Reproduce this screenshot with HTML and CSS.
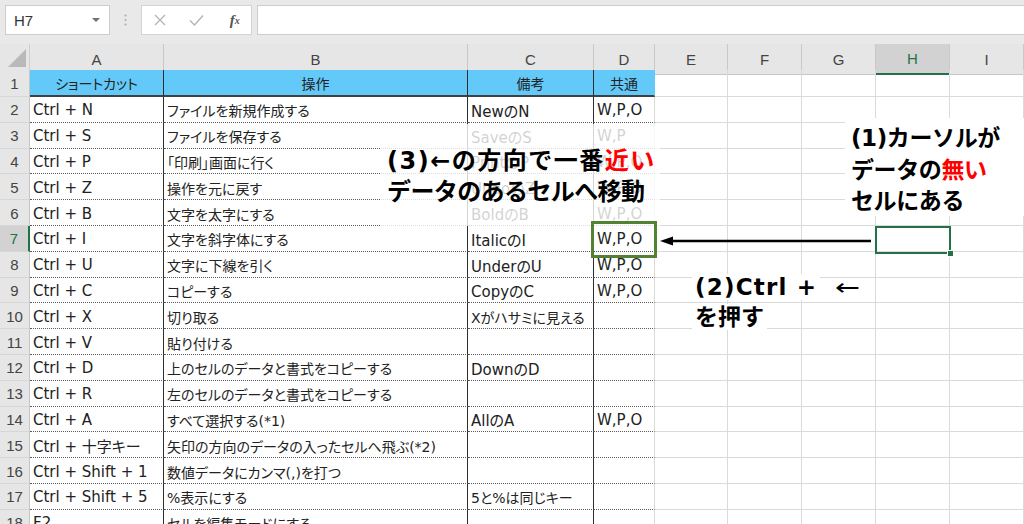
FILE: index.html
```html
<!DOCTYPE html>
<html lang="ja">
<head>
<meta charset="utf-8">
<title>Excel ショートカット</title>
<link rel="stylesheet" href="styles.css">
</head>
<body>
<div class="fbar">
  <div class="namebox"><span>H7</span><span class="caret"></span></div>
  <div class="sep"><svg width="3" height="12" viewBox="0 0 3 12"><circle cx="1.5" cy="1.5" r="1" fill="#a8a8a8"/><circle cx="1.5" cy="6" r="1" fill="#a8a8a8"/><circle cx="1.5" cy="10.5" r="1" fill="#a8a8a8"/></svg></div>
  <div class="fxbox">
    <span class="ico"><svg width="12" height="12" viewBox="0 0 12 12"><path d="M1 1L11 11M11 1L1 11" stroke="#b4b4b4" stroke-width="1.3" fill="none"/></svg></span>
    <span class="ico"><svg width="15" height="12" viewBox="0 0 15 12"><path d="M1 6.5L5.5 11L14 1.5" stroke="#b4b4b4" stroke-width="1.4" fill="none"/></svg></span>
    <span class="ico fx">f<sub>x</sub></span>
  </div>
  <div class="formula"></div>
</div>

<div class="sheet">
  <div class="row hdr">
    <div class="corner"><svg width="30" height="26" viewBox="0 0 30 26"><polygon points="8,23 26,23 26,5" fill="#b9b9b9"/></svg></div>
    <div class="ch">A</div><div class="ch">B</div><div class="ch">C</div><div class="ch">D</div><div class="ch">E</div><div class="ch">F</div><div class="ch">G</div><div class="ch sel">H</div><div class="ch">I</div>
  </div>
  <div class="row r1">
    <div class="rh">1</div>
    <div class="c h k">ショートカット</div><div class="c h k">操作</div><div class="c h k">備考</div><div class="c h hd">共通</div>
    <div class="c"></div><div class="c"></div><div class="c"></div><div class="c"></div><div class="c"></div>
  </div>
  <div class="row">
    <div class="rh">2</div>
    <div class="c t k">Ctrl + N</div><div class="c t k b">ファイルを新規作成する</div><div class="c t k">NewのN</div><div class="c t">W,P,O</div>
    <div class="c"></div><div class="c"></div><div class="c"></div><div class="c"></div><div class="c"></div>
  </div>
  <div class="row">
    <div class="rh">3</div>
    <div class="c t k">Ctrl + S</div><div class="c t k b">ファイルを保存する</div><div class="c t k">SaveのS</div><div class="c t">W,P</div>
    <div class="c"></div><div class="c"></div><div class="c"></div><div class="c"></div><div class="c"></div>
  </div>
  <div class="row">
    <div class="rh">4</div>
    <div class="c t k">Ctrl + P</div><div class="c t k b">「印刷」画面に行く</div><div class="c t k">PrintのP</div><div class="c t">W,P,O</div>
    <div class="c"></div><div class="c"></div><div class="c"></div><div class="c"></div><div class="c"></div>
  </div>
  <div class="row">
    <div class="rh">5</div>
    <div class="c t k">Ctrl + Z</div><div class="c t k b">操作を元に戻す</div><div class="c t k">UndoのZ</div><div class="c t">W,P,O</div>
    <div class="c"></div><div class="c"></div><div class="c"></div><div class="c"></div><div class="c"></div>
  </div>
  <div class="row">
    <div class="rh">6</div>
    <div class="c t k">Ctrl + B</div><div class="c t k b">文字を太字にする</div><div class="c t k">BoldのB</div><div class="c t">W,P,O</div>
    <div class="c"></div><div class="c"></div><div class="c"></div><div class="c"></div><div class="c"></div>
  </div>
  <div class="row">
    <div class="rh sel">7</div>
    <div class="c t k">Ctrl + I</div><div class="c t k b">文字を斜字体にする</div><div class="c t k">ItalicのI</div><div class="c t">W,P,O</div>
    <div class="c"></div><div class="c"></div><div class="c"></div><div class="c"></div><div class="c"></div>
  </div>
  <div class="row">
    <div class="rh">8</div>
    <div class="c t k">Ctrl + U</div><div class="c t k b">文字に下線を引く</div><div class="c t k">UnderのU</div><div class="c t">W,P,O</div>
    <div class="c"></div><div class="c"></div><div class="c"></div><div class="c"></div><div class="c"></div>
  </div>
  <div class="row">
    <div class="rh">9</div>
    <div class="c t k">Ctrl + C</div><div class="c t k b">コピーする</div><div class="c t k">CopyのC</div><div class="c t">W,P,O</div>
    <div class="c"></div><div class="c"></div><div class="c"></div><div class="c"></div><div class="c"></div>
  </div>
  <div class="row">
    <div class="rh">10</div>
    <div class="c t k">Ctrl + X</div><div class="c t k b">切り取る</div><div class="c t k b">Xがハサミに見える</div><div class="c t"></div>
    <div class="c"></div><div class="c"></div><div class="c"></div><div class="c"></div><div class="c"></div>
  </div>
  <div class="row">
    <div class="rh">11</div>
    <div class="c t k">Ctrl + V</div><div class="c t k b">貼り付ける</div><div class="c t k"></div><div class="c t"></div>
    <div class="c"></div><div class="c"></div><div class="c"></div><div class="c"></div><div class="c"></div>
  </div>
  <div class="row">
    <div class="rh">12</div>
    <div class="c t k">Ctrl + D</div><div class="c t k b">上のセルのデータと書式をコピーする</div><div class="c t k">DownのD</div><div class="c t"></div>
    <div class="c"></div><div class="c"></div><div class="c"></div><div class="c"></div><div class="c"></div>
  </div>
  <div class="row">
    <div class="rh">13</div>
    <div class="c t k">Ctrl + R</div><div class="c t k b">左のセルのデータと書式をコピーする</div><div class="c t k"></div><div class="c t"></div>
    <div class="c"></div><div class="c"></div><div class="c"></div><div class="c"></div><div class="c"></div>
  </div>
  <div class="row">
    <div class="rh">14</div>
    <div class="c t k">Ctrl + A</div><div class="c t k b">すべて選択する(*1)</div><div class="c t k">AllのA</div><div class="c t">W,P,O</div>
    <div class="c"></div><div class="c"></div><div class="c"></div><div class="c"></div><div class="c"></div>
  </div>
  <div class="row">
    <div class="rh">15</div>
    <div class="c t k">Ctrl + 十字キー</div><div class="c t k b">矢印の方向のデータの入ったセルへ飛ぶ(*2)</div><div class="c t k"></div><div class="c t"></div>
    <div class="c"></div><div class="c"></div><div class="c"></div><div class="c"></div><div class="c"></div>
  </div>
  <div class="row">
    <div class="rh">16</div>
    <div class="c t k">Ctrl + Shift + 1</div><div class="c t k b">数値データにカンマ(,)を打つ</div><div class="c t k"></div><div class="c t"></div>
    <div class="c"></div><div class="c"></div><div class="c"></div><div class="c"></div><div class="c"></div>
  </div>
  <div class="row">
    <div class="rh">17</div>
    <div class="c t k">Ctrl + Shift + 5</div><div class="c t k b">%表示にする</div><div class="c t k b">5と%は同じキー</div><div class="c t"></div>
    <div class="c"></div><div class="c"></div><div class="c"></div><div class="c"></div><div class="c"></div>
  </div>
  <div class="row">
    <div class="rh">18</div>
    <div class="c t k">F2</div><div class="c t k b">セルを編集モードにする</div><div class="c t k"></div><div class="c t"></div>
    <div class="c"></div><div class="c"></div><div class="c"></div><div class="c"></div><div class="c"></div>
  </div>
</div>

<div class="note n3"><div class="l1">(3)←の方向で一番<span class="red">近い</span></div><div class="l2">データのあるセルへ移動</div></div>
<div class="note n1"><div>(1)カーソルが</div><div>データの<span class="red">無い</span></div><div>セルにある</div></div>
<div class="note n2"><div class="l1"><span class="bg">(2)Ctrl +</span> <span class="arr">←</span></div><div><span class="bg">を押す</span></div></div>

<div class="mark"></div>
<div class="cursor"><span class="handle"></span></div>
<svg class="arrow" width="214" height="14" viewBox="0 0 214 14"><line x1="10" y1="7" x2="212" y2="7" stroke="#000" stroke-width="2.5"/><polygon points="1,7 14,2.5 14,11.5" fill="#000"/></svg>
</body>
</html>
```
FILE: styles.css
```css
* { box-sizing: border-box; }
html, body { margin: 0; padding: 0; }
body {
  width: 1024px;
  height: 524px;
  overflow: hidden;
  position: relative;
  background: #fff;
  font-family: "DejaVu Sans", "Noto Sans CJK JP", sans-serif;
}

/* formula bar */
.fbar {
  height: 44px;
  background: #e9e9e9;
  display: flex;
  align-items: flex-start;
  padding: 5px 0 0 5px;
}
.namebox {
  width: 105px;
  height: 30px;
  background: #fff;
  border: 1px solid #cdcdcd;
  display: flex;
  align-items: center;
  justify-content: space-between;
  padding: 0 9px 0 8px;
  font: 15px "Liberation Sans", sans-serif;
  color: #333;
}
.caret {
  width: 0;
  height: 0;
  border-left: 4px solid transparent;
  border-right: 4px solid transparent;
  border-top: 4px solid #707070;
}
.sep {
  width: 31px;
  height: 30px;
  display: flex;
  align-items: center;
  justify-content: center;
}
.fxbox {
  width: 111px;
  height: 30px;
  background: #fff;
  border: 1px solid #d3d3d3;
  display: flex;
  align-items: center;
}
.ico {
  width: 37px;
  display: flex;
  justify-content: center;
  align-items: center;
}
.fx {
  font: italic bold 15px "Liberation Serif", serif;
  color: #555;
  padding-left: 4px;
}
.fx sub { font-size: 10px; vertical-align: -1px; }
.formula {
  flex: 1;
  height: 30px;
  margin: 0 -2px 0 5px;
  background: #fff;
  border: 1px solid #cdcdcd;
}

/* sheet */
.sheet { display: flex; flex-direction: column; }
.row {
  display: grid;
  grid-template-columns: 30px 134px 304px 126px 61px 73px 74px 74px 74px 74px;
  height: 25.8px;
}
.row.hdr { height: 26px; }
.row.r1 { height: 27px; }

.corner {
  background: #e6e6e6;
  border-right: 1px solid #cfcfcf;
  border-bottom: 1px solid #c6c6c6;
}
.ch, .rh {
  background: #e6e6e6;
  color: #444;
  font: 15px "Liberation Sans", sans-serif;
  display: flex;
  align-items: center;
  justify-content: center;
}
.ch {
  border-right: 1px solid #c9c9c9;
  border-bottom: 1px solid #c6c6c6;
}
.rh {
  border-right: 1px solid #c6c6c6;
  border-bottom: 1px solid #d6d6d6;
  padding-top: 1px;
}
.ch.sel {
  background: #d2d2d2;
  color: #217346;
  border-bottom: 2px solid #217346;
}
.rh.sel {
  background: #d2d2d2;
  color: #217346;
  border-right: 2px solid #217346;
}

.c {
  border-right: 1px solid #dadada;
  border-bottom: 1px solid #dadada;
  display: flex;
  align-items: center;
  padding: 2px 0 0 3px;
  white-space: nowrap;
  font-size: 15px;
  color: #222;
  font-feature-settings: "palt";
}
.c.b { font-size: 14px; }
.c.t { border-bottom: 1px dotted #5a5a5a; }
.c.k { border-right: 1px solid #2e2e2e; }
.c.h {
  background: #63c9f9;
  border-bottom: 2px solid #404040;
  justify-content: center;
  padding: 1px 0 0 0;
  font-size: 14px;
}
.c.hd { border-right: 1px solid #63c9f9; }

/* overlays */
.note {
  position: absolute;
  font-family: "DejaVu Sans", "Noto Sans CJK JP", sans-serif;
  font-weight: bold;
  color: #000;
  white-space: nowrap;
}
.red { color: #ff0000; }
.n3 {
  left: 380px;
  top: 124px;
  width: 280px;
  height: 102px;
  padding: 22px 0 0 7px;
  background: rgba(255, 255, 255, 0.8);
  font-size: 24px;
  line-height: 31px;
}
.n3 .l1 { letter-spacing: 1.5px; }
.n3 .l2 { letter-spacing: -0.6px; }
.n1 {
  left: 845px;
  top: 118px;
  width: 179px;
  height: 98px;
  padding: 5px 0 0 6px;
  background: #fff;
  font-size: 23px;
  line-height: 31.5px;
  letter-spacing: -0.4px;
}
.n2 {
  left: 692px;
  top: 272px;
  font-size: 23px;
  line-height: 30px;
}
.n2 .bg { background: #fff; padding: 0 3px; }
.n2 .l1 .bg { letter-spacing: 1.2px; }
.n2 .arr { font-weight: normal; margin-left: 10px; display: inline-block; transform: scaleX(1.3); }

.mark {
  position: absolute;
  left: 591px;
  top: 221px;
  width: 66px;
  height: 37px;
  border: 3px solid #548235;
}
.cursor {
  position: absolute;
  left: 875px;
  top: 226px;
  width: 76px;
  height: 28px;
  border: 2px solid #217346;
}
.handle {
  position: absolute;
  right: -5px;
  bottom: -5px;
  width: 7px;
  height: 7px;
  background: #217346;
  border: 1px solid #fff;
}
.arrow {
  position: absolute;
  left: 659px;
  top: 234px;
}
```
